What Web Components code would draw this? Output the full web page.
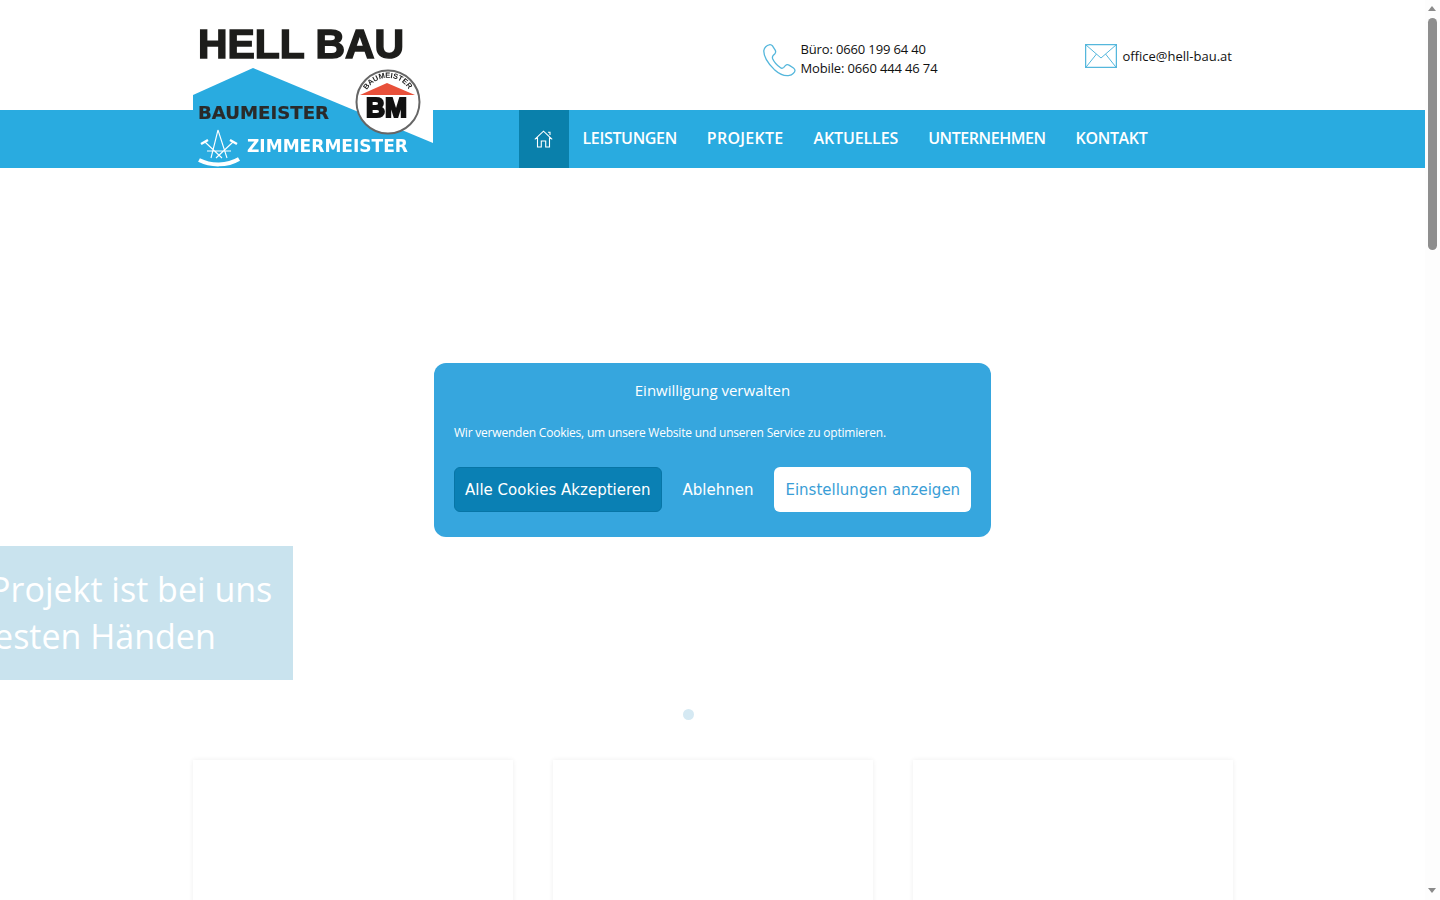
<!DOCTYPE html>
<html lang="de">
<head>
<meta charset="utf-8">
<title>Hell Bau</title>
<style>
  html, body { margin: 0; height: 100%; overflow: hidden; background: #fff; }
  body { font-family: "Open Sans", "Noto Sans", sans-serif; color: #111; }
</style>
</head>
<body>
<hb-page>
  <hb-header>
    <hb-contact slot="phone" icon="phone"><span>Büro: 0660 199 64 40</span><span>Mobile: 0660 444 46 74</span></hb-contact>
    <hb-contact slot="mail" icon="mail"><span>office@hell-bau.at</span></hb-contact>
  </hb-header>
  <hb-nav>
    <hb-nav-item home></hb-nav-item>
    <hb-nav-item style="padding-left:14px">LEISTUNGEN</hb-nav-item>
    <hb-nav-item style="letter-spacing:.27px">PROJEKTE</hb-nav-item>
    <hb-nav-item style="letter-spacing:-.13px">AKTUELLES</hb-nav-item>
    <hb-nav-item style="letter-spacing:-.44px">UNTERNEHMEN</hb-nav-item>
    <hb-nav-item>KONTAKT</hb-nav-item>
  </hb-nav>
  <hb-hero>
    <span>Ihr Projekt ist bei uns</span>
    <span>in besten Händen</span>
  </hb-hero>
  <hb-cards>
    <hb-card></hb-card>
    <hb-card></hb-card>
    <hb-card></hb-card>
  </hb-cards>
  <hb-logo></hb-logo>
  <hb-consent title="Einwilligung verwalten">
    Wir verwenden Cookies, um unsere Website und unseren Service zu optimieren.
    <hb-button slot="actions" kind="accept">Alle Cookies Akzeptieren</hb-button>
    <hb-button slot="actions" kind="deny">Ablehnen</hb-button>
    <hb-button slot="actions" kind="view">Einstellungen anzeigen</hb-button>
  </hb-consent>
</hb-page>
<hb-scrollbar></hb-scrollbar>

<script>
// every element just stamps its markup into an open shadow root
function el(name, markup, extra) {
  const template = document.createElement('template');
  template.innerHTML = markup;
  class Element extends HTMLElement {
    constructor() {
      super();
      this.attachShadow({ mode: 'open' }).appendChild(template.content.cloneNode(true));
    }
    connectedCallback() { if (extra) extra(this); }
  }
  customElements.define(name, Element);
}

const BLUE = '#29abe0';
const ICON = '#55b7dc';

el('hb-page', `
  <style>
    :host { display: block; position: absolute; left: 0; top: 0; width: 1425px; height: 900px; overflow: hidden; background: #fff; }
  </style>
  <slot></slot>`);

el('hb-header', `
  <style>
    :host { display: block; height: 110px; }
    .row { width: 1040px; height: 110px; margin: 0 auto; display: grid; grid-template-columns: 570px 322px 148px; align-items: center; }
    ::slotted([slot=phone]) { margin-top: 7px; }
    ::slotted([slot=mail]) { margin-top: 2px; }
  </style>
  <div class="row"><span></span><slot name="phone"></slot><slot name="mail"></slot></div>`);

el('hb-contact', `
  <style>
    :host { display: flex; align-items: center; gap: 6px; font: 13px/19px "Open Sans", sans-serif; color: #111; }
    :host([icon=phone]) { gap: 5px; letter-spacing: -.14px; }
    svg { display: block; flex: none; fill: none; stroke: ${ICON}; stroke-width: 1.3; }
    .text { display: flex; flex-direction: column; white-space: nowrap; }
    ::slotted(span) { display: block; }
  </style>
  <span id="icon"></span>
  <div class="text"><slot></slot></div>`, host => {
    const phone = `<svg width="33" height="33" viewBox="0 0 32.5 32.5" style="margin-top:3px"><path d="M6 .8C4 1.2 1 3.5.8 6.5.5 13 6 20 11 25c5 4.500 10 7 15 6 2.500-.5 5.500-3 5.500-5 0-1-.5-1.700-1.500-2.400L26 21c-1.500-1-3-.7-4 .3L20.500 23c-1 1-2.500 1-3.500.2-3-2.200-6-5.200-7.500-8.700-.5-1.500-.3-2.500.7-3.500l1.300-1.200c1-1 1.300-2.300.5-3.800L9.500 2C8.500.8 7.300.5 6 .8Z"/></svg>`;
    const mail = `<svg width="32" height="24" viewBox="0 0 32 24"><rect x=".6" y=".6" width="30.800" height="22.800"/><path d="M.8.8 16 14 31.200.8M1 23.200 11.500 10M31 23.200 20.500 10" stroke-width="1"/></svg>`;
    host.shadowRoot.getElementById('icon').innerHTML = host.getAttribute('icon') === 'phone' ? phone : mail;
  });

el('hb-nav', `
  <style>
    :host { display: block; height: 58px; background: ${BLUE}; }
    nav { width: 1040px; height: 58px; margin: 0 auto; padding-left: 326px; box-sizing: border-box; display: flex; }
  </style>
  <nav><slot></slot></nav>`);

el('hb-nav-item', `
  <style>
    :host { display: flex; align-items: center; padding: 0 15px 2px; color: #fff; font: 600 16px/56px "Open Sans", sans-serif; letter-spacing: -.35px; white-space: nowrap; }
    :host([home]) { width: 50px; padding: 0; justify-content: center; background: #0a80ab; }
    svg { display: none; fill: none; stroke: #fff; stroke-width: 1.100; }
    :host([home]) svg { display: block; }
  </style>
  <svg width="19" height="18" viewBox="0 0 19 18"><path d="M.8 9.300 9.500 1.200 18.200 9.300M3.500 7.500V17H7.300V11H11.700V17H15.500V7.500M14 2.200h2v2.800"/></svg>
  <slot></slot>`);

el('hb-hero', `
  <style>
    :host { display: block; height: 592px; position: relative; }
    .box { position: absolute; left: 0; top: 378px; width: 293px; height: 134px; background: #c9e3ee; overflow: hidden; }
    .text { display: flex; flex-direction: column; width: max-content; transform: translateX(-63px); padding-top: 20px; color: #fff; font: 34px/47px "Open Sans", sans-serif; white-space: nowrap; }
    ::slotted(span) { display: block; }
    ::slotted(span:last-child) { margin-left: -2px; }
    .dot { position: absolute; left: 682.5px; top: 541px; width: 11px; height: 11px; border-radius: 50%; background: #d5e9f3; }
  </style>
  <div class="box"><div class="text"><slot></slot></div></div>
  <div class="dot"></div>`);

el('hb-cards', `
  <style>
    :host { display: grid; grid-template-columns: repeat(3, 320px); gap: 40px; width: 1040px; margin: 0 auto; }
  </style>
  <slot></slot>`);

el('hb-card', `
  <style>
    :host { display: block; height: 300px; background: #fff; box-shadow: 0 0 5px rgba(0,0,0,.07); }
  </style>`);

el('hb-logo', `
  <style>
    :host { display: block; position: absolute; left: 193px; top: 20px; width: 240px; height: 148px; }
    svg { display: block; filter: blur(.35px); }
    text { font-family: "Liberation Sans", sans-serif; font-weight: 700; }
    .deco { font-family: "DejaVu Sans", sans-serif; }
  </style>
  <svg width="240" height="148" viewBox="0 0 240 148">
    <rect width="240" height="148" fill="#fff"/>
    <path d="M0 75 60 48 240 123V148H0Z" fill="${BLUE}"/>
    <text x="5" y="37.500" font-size="40" textLength="206" lengthAdjust="spacingAndGlyphs" fill="#1d1d1b" stroke="#1d1d1b" stroke-width="1.500">HELL BAU</text>
    <text class="deco" x="5" y="99" font-size="18" textLength="131" lengthAdjust="spacingAndGlyphs" fill="#2a2a2a" stroke="#2a2a2a" stroke-width=".2">BAUMEISTER</text>
    <text class="deco" x="54" y="131.500" font-size="18" textLength="161" lengthAdjust="spacingAndGlyphs" fill="#fff">ZIMMERMEISTER</text>
    <!-- carpenter emblem -->
    <g fill="none" stroke="#fff" stroke-width="1.100">
      <path d="M25 110 18 138M25 110 34 138M14 131 38 131M12 122 29 138M40 122 23 138"/>
      <path d="M8 124 15 120M44 124 37 120" stroke-width="2.500"/>
      <path d="M6 140C18 146 34 146 46 139" stroke-width="4"/>
    </g>
    <!-- baumeister badge -->
    <circle cx="195" cy="82" r="31.500" fill="#fff" stroke="#666" stroke-width="2"/>
    <path id="arc" d="M174 70A24.200 24.200 0 0 1 216 70" fill="none"/>
    <text font-size="7.500" fill="#222"><textPath href="#arc" textLength="50">BAUMEISTER</textPath></text>
    <path d="M167 75 194 63 222 75Z" fill="#e8503a"/>
    <text x="173" y="97" font-size="27" textLength="41" lengthAdjust="spacingAndGlyphs" fill="#111" stroke="#111" stroke-width="2.200">BM</text>
  </svg>`);

el('hb-consent', `
  <style>
    :host { position: absolute; inset: 0; display: flex; align-items: center; justify-content: center; }
    .box { width: 557px; height: 174px; box-sizing: border-box; padding: 17px 20px 25px; background: #36a6de; border-radius: 12px; color: #fff; display: flex; flex-direction: column; font-family: "Open Sans", sans-serif; }
    h2 { margin: 0; font: 400 15px/20px "Open Sans", sans-serif; text-align: center; }
    p { margin: 23px 0 0; font-size: 12px; line-height: 20px; letter-spacing: -.21px; white-space: nowrap; }
    .actions { margin-top: 24px; display: flex; gap: 10px; }
  </style>
  <div class="box">
    <h2 id="title"></h2>
    <p><slot></slot></p>
    <div class="actions"><slot name="actions"></slot></div>
  </div>`, host => {
    host.shadowRoot.getElementById('title').textContent = host.getAttribute('title');
  });

el('hb-button', `
  <style>
    :host { display: flex; align-items: center; justify-content: center; height: 45px; box-sizing: border-box; border-radius: 6px; padding: 2px 11px 0; font: 15px/1 "DejaVu Sans", sans-serif; white-space: nowrap; color: #fff; }
    :host([kind=accept]) { background: #0a80b4; border: 1px solid #0775a6; padding: 2px 10px 0; }
    :host([kind=view]) { background: #fff; color: #3a9ed6; }
  </style>
  <slot></slot>`);

el('hb-scrollbar', `
  <style>
    :host { display: block; position: absolute; left: 1425px; top: 0; width: 15px; height: 900px; background: #fdfdfd; }
    .thumb { position: absolute; left: 3px; top: 18px; width: 9px; height: 232px; border-radius: 5px; background: #8e8e8e; }
    .up, .down { position: absolute; left: 3px; width: 0; height: 0; border: solid transparent; border-width: 0 4.500px; }
    .up { top: 6px; border-bottom: 5px solid #8a8a8a; }
    .down { top: 888px; border-top: 5px solid #8a8a8a; }
  </style>
  <div class="up"></div><div class="thumb"></div><div class="down"></div>`);
</script>
</body>
</html>
